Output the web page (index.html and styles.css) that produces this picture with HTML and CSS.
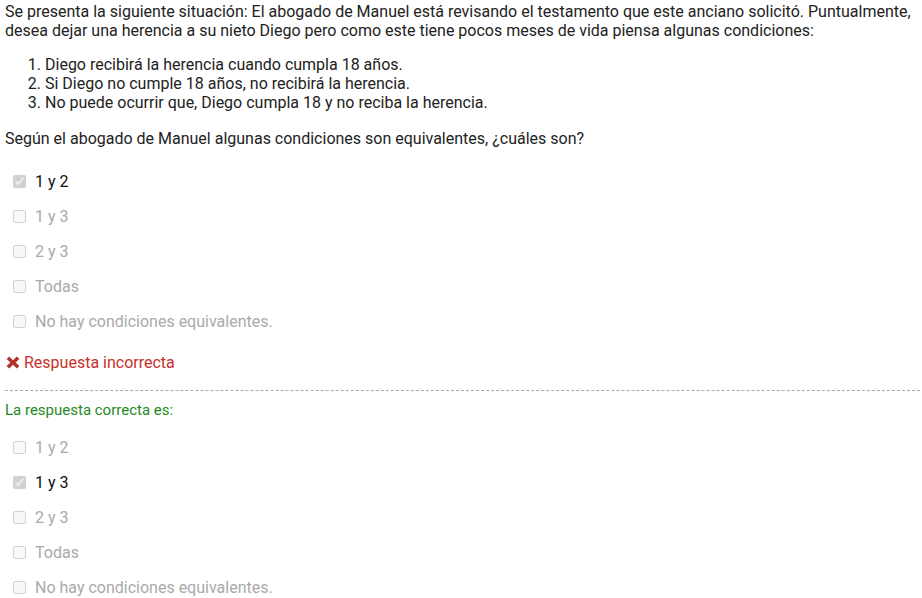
FILE: index.html
```html
<!DOCTYPE html>
<html lang="es">
<head>
<meta charset="utf-8">
<link rel="stylesheet" href="styles.css">
</head>
<body>
<div class="question">
  <p class="stem">Se presenta la siguiente situación: El abogado de Manuel está revisando el testamento que este anciano solicitó. Puntualmente, desea dejar una herencia a su nieto Diego pero como este tiene pocos meses de vida piensa algunas condiciones:</p>
  <ol class="conds">
    <li>Diego recibirá la herencia cuando cumpla 18 años.</li>
    <li>Si Diego no cumple 18 años, no recibirá la herencia.</li>
    <li>No puede ocurrir que, Diego cumpla 18 y no reciba la herencia.</li>
  </ol>
  <p class="ask">Según el abogado de Manuel algunas condiciones son equivalentes, ¿cuáles son?</p>

  <ul class="options">
    <li class="opt sel"><input type="checkbox" checked disabled><span>1 y 2</span></li>
    <li class="opt"><input type="checkbox" disabled><span>1 y 3</span></li>
    <li class="opt"><input type="checkbox" disabled><span>2 y 3</span></li>
    <li class="opt"><input type="checkbox" disabled><span>Todas</span></li>
    <li class="opt"><input type="checkbox" disabled><span>No hay condiciones equivalentes.</span></li>
  </ul>

  <div class="result"><svg class="xicon" viewBox="0 0 14 13" width="14" height="13"><path d="M0.6 3.1 L3.1 0.6 L7 4.2 L10.9 0.6 L13.4 3.1 L9.6 6.5 L13.4 9.9 L10.9 12.4 L7 8.8 L3.1 12.4 L0.6 9.9 L4.4 6.5 Z" fill="#b3322c"/></svg><span>Respuesta incorrecta</span></div>

  <div class="correct">
    <p class="correct-title">La respuesta correcta es:</p>
    <ul class="options">
      <li class="opt"><input type="checkbox" disabled><span>1 y 2</span></li>
      <li class="opt sel"><input type="checkbox" checked disabled><span>1 y 3</span></li>
      <li class="opt"><input type="checkbox" disabled><span>2 y 3</span></li>
      <li class="opt"><input type="checkbox" disabled><span>Todas</span></li>
      <li class="opt"><input type="checkbox" disabled><span>No hay condiciones equivalentes.</span></li>
    </ul>
  </div>
</div>
</body>
</html>
```

FILE: styles.css
```css
html, body {
  margin: 0;
  padding: 0;
  background: #fff;
}
body {
  font-family: Roboto, "Noto Sans", Arial, sans-serif;
  font-size: 16px;
  line-height: 19px;
  color: #222;
}
.question {
  padding: 2px 2px 0 5px;
}
.stem {
  margin: 0;
}
.conds {
  margin: 15px 0 0 0;
  padding-left: 40px;
}
.ask {
  margin: 17px 0 0 0;
}
.options {
  list-style: none;
  margin: 0;
  padding: 0;
}
.opt {
  display: flex;
  align-items: center;
  height: 35px;
  color: #aaa;
}
.opt input {
  width: 13px;
  height: 13px;
  margin: 0 9px 0 8px;
}
.opt.sel {
  color: #111;
}
.question > .options {
  margin-top: 16px;
}
.result {
  display: flex;
  align-items: center;
  gap: 4px;
  margin-top: 13px;
  padding-left: 1px;
  color: #c9302c;
  height: 20px;
}
.xicon {
  display: block;
}
.correct {
  margin-top: 18px;
  border-top: 1px dashed #aaa;
}
.correct-title {
  margin: 10px 0 0 0;
  font-size: 15px;
  color: #1e8a1e;
}
.correct .options {
  margin-top: 10px;
}
```
